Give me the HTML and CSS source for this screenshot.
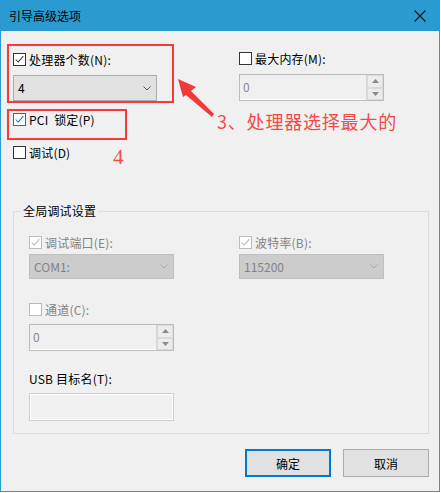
FILE: index.html
```html
<!DOCTYPE html>
<html lang="zh-CN">
<head>
<meta charset="utf-8">
<title>引导高级选项</title>
<link rel="stylesheet" href="styles.css">
</head>
<body>
<div class="window">
  <div class="titlebar">
    <span class="title">引导高级选项</span>
    <svg class="close" width="12" height="12" viewBox="0 0 12 12"><path d="M0.5 0.5 L11.5 11.5 M11.5 0.5 L0.5 11.5" stroke="#111" stroke-width="1.1" fill="none"/></svg>
  </div>
  <div class="content">
    <div class="top">
      <div class="col-left">
        <div class="redbox box1">
          <label class="check-row">
            <span class="cb"><svg viewBox="0 0 13 13" width="11" height="11"><path d="M2 6.5 L5 9.5 L11 2.5" stroke="#333" stroke-width="1.2" fill="none"/></svg></span>
            <span>处理器个数(N):</span>
          </label>
          <div class="combo combo-main"><span>4</span>
            <svg class="chev" width="8" height="5" viewBox="0 0 8 5"><path d="M0.5 0.5 L4 4 L7.5 0.5" stroke="#555" fill="none"/></svg>
          </div>
        </div>
        <div class="redbox box2">
          <label class="check-row">
            <span class="cb cb-focus"><svg viewBox="0 0 13 13" width="11" height="11"><path d="M2 6.5 L5 9.5 L11 2.5" stroke="#0078d7" stroke-width="1.2" fill="none"/></svg></span>
            <span>PCI&nbsp; 锁定(P)</span>
          </label>
        </div>
        <label class="check-row debug-row">
          <span class="cb"></span>
          <span>调试(D)</span>
        </label>
      </div>
      <div class="col-right">
        <label class="check-row">
          <span class="cb"></span>
          <span>最大内存(M):</span>
        </label>
        <div class="spin spin-mem">
          <span class="spin-val">0</span>
          <div class="spin-btns">
            <div class="sbtn"><svg width="7" height="4" viewBox="0 0 7 4"><path d="M0 4 L3.5 0 L7 4Z" fill="#8a8a8a"/></svg></div>
            <div class="sbtn"><svg width="7" height="4" viewBox="0 0 7 4"><path d="M0 0 L3.5 4 L7 0Z" fill="#8a8a8a"/></svg></div>
          </div>
        </div>
      </div>
    </div>

    <div class="group">
      <span class="legend">全局调试设置</span>
      <div class="group-grid">
        <div class="gcol">
          <label class="check-row disabled">
            <span class="cb cb-dis"><svg viewBox="0 0 13 13" width="11" height="11"><path d="M2 6.5 L5 9.5 L11 2.5" stroke="#b5b5b5" stroke-width="1.2" fill="none"/></svg></span>
            <span>调试端口(E):</span>
          </label>
          <div class="combo combo-dis"><span>COM1:</span>
            <svg class="chev" width="8" height="5" viewBox="0 0 8 5"><path d="M0.5 0.5 L4 4 L7.5 0.5" stroke="#a8a8a8" fill="none"/></svg>
          </div>
          <label class="check-row disabled channel-row">
            <span class="cb cb-dis"></span>
            <span>通道(C):</span>
          </label>
          <div class="spin spin-chan">
            <span class="spin-val">0</span>
            <div class="spin-btns">
              <div class="sbtn"><svg width="7" height="4" viewBox="0 0 7 4"><path d="M0 4 L3.5 0 L7 4Z" fill="#8a8a8a"/></svg></div>
              <div class="sbtn"><svg width="7" height="4" viewBox="0 0 7 4"><path d="M0 0 L3.5 4 L7 0Z" fill="#8a8a8a"/></svg></div>
            </div>
          </div>
          <div class="usb-label">USB 目标名(T):</div>
          <div class="textbox"></div>
        </div>
        <div class="gcol">
          <label class="check-row disabled">
            <span class="cb cb-dis"><svg viewBox="0 0 13 13" width="11" height="11"><path d="M2 6.5 L5 9.5 L11 2.5" stroke="#b5b5b5" stroke-width="1.2" fill="none"/></svg></span>
            <span>波特率(B):</span>
          </label>
          <div class="combo combo-dis"><span>115200</span>
            <svg class="chev" width="8" height="5" viewBox="0 0 8 5"><path d="M0.5 0.5 L4 4 L7.5 0.5" stroke="#a8a8a8" fill="none"/></svg>
          </div>
        </div>
      </div>
    </div>

    <div class="buttons">
      <button class="btn btn-default">确定</button>
      <button class="btn">取消</button>
    </div>
  </div>

  <div class="note note3">3、处理器选择最大的</div>
  <div class="note note4">4</div>
  <svg class="arrow" width="440" height="200" viewBox="0 0 440 200">
    <polygon points="178,79 196,87 191,91 214,114 212,117 186,95 183,97" fill="#f03a3a"/>
  </svg>
</div>
</body>
</html>
```

FILE: styles.css
```css
* { box-sizing: border-box; }
html, body { margin: 0; padding: 0; background: #ffffff; }
body {
  font-family: "Noto Sans CJK SC", "Noto Sans", sans-serif;
  font-size: 12px;
  color: #000;
}
.window {
  position: relative;
  width: 440px;
  height: 492px;
  background: #f0f0f0;
  border: 1px solid #2a9ad0;
  border-top: none;
  display: flex;
  flex-direction: column;
}
.titlebar {
  flex: none;
  height: 31px;
  margin: 0 -1px;
  background: #2a9ad0;
  display: flex;
  align-items: center;
  justify-content: space-between;
  padding: 0 10px 0 9px;
}
.title { font-size: 12px; line-height: 16px; color: #000; }
.close { display: block; margin-right: 4px; }

.content { display: flex; flex-direction: column; }

.top {
  display: grid;
  grid-template-columns: 238px 1fr;
}
.col-left { padding-left: 6px; display: flex; flex-direction: column; }
.redbox { border: 2px solid #f63a3a; }
.box1 {
  margin-top: 13px;
  width: 167px;
  height: 59px;
  padding: 7px 0 0 4px;
}
.box2 {
  margin-top: 6px;
  width: 120px;
  height: 31px;
  padding: 2px 0 0 4px;
}
.check-row {
  display: flex;
  align-items: center;
  gap: 3px;
  height: 13px;
  line-height: 16px;
  white-space: nowrap;
  letter-spacing: 0.2px;
}
.cb {
  width: 13px;
  height: 13px;
  flex: none;
  border: 1px solid #333;
  background: #fff;
  display: flex;
  align-items: center;
  justify-content: center;
}
.cb-focus { border-color: #0078d7; }
.cb-dis { border-color: #bcbcbc; background: #fff; }
.disabled { color: #838383; }
.debug-row { margin-top: 6px; margin-left: 6px; }

.combo {
  display: flex;
  align-items: center;
  justify-content: space-between;
  padding: 0 5px 0 4px;
  line-height: 16px;
}
.combo-main {
  margin-top: 9px;
  width: 144px;
  height: 26px;
  background: #e1e1e1;
  border: 1px solid #adadad;
}
.combo-dis {
  margin-top: 5px;
  width: 145px;
  height: 25px;
  background: #cccccc;
  border: 1px solid #bfbfbf;
  color: #838383;
}

.col-right { display: flex; flex-direction: column; }
.col-right .check-row { margin-top: 21px; }

.spin {
  display: flex;
  width: 145px;
  height: 27px;
  border: 1px solid #bcbcbc;
  background: #f0f0f0;
  box-shadow: inset -1px -1px 0 #fff;
}
.spin-mem { margin-top: 9px; }
.spin-chan { margin-top: 8px; }
.spin-val { flex: 1; padding: 4px 0 0 3px; color: #8a8a8a; line-height: 16px; }
.spin-btns {
  width: 17px;
  display: flex;
  flex-direction: column;
  border-left: 1px solid #d5d5d5;
}
.sbtn {
  flex: 1;
  display: flex;
  align-items: center;
  justify-content: center;
  background: #ececec;
  border: 1px solid #dadada;
}

.group {
  position: relative;
  margin: 52px 0 0 12px;
  width: 416px;
  height: 223px;
  border: 1px solid #dcdcdc;
}
.legend {
  position: absolute;
  top: -9px;
  left: 7px;
  padding: 0 2px;
  background: #f0f0f0;
  line-height: 16px;
  letter-spacing: 0.2px;
}
.group-grid {
  display: grid;
  grid-template-columns: 210px 1fr;
  padding: 24px 0 0 15px;
}
.gcol { display: flex; flex-direction: column; }
.channel-row { margin-top: 24px; }
.usb-label { margin-top: 19px; line-height: 17px; height: 17px; letter-spacing: 0.2px; }
.textbox {
  margin-top: 6px;
  width: 145px;
  height: 28px;
  border: 1px solid #cfcfcf;
  box-shadow: inset 1px 1px 0 #fff, inset -1px -1px 0 #fff;
  background: #f0f0f0;
}

.buttons {
  display: flex;
  justify-content: flex-end;
  gap: 12px;
  margin-top: 15px;
  padding-right: 10px;
}
.btn {
  width: 86px;
  height: 28px;
  font: inherit;
  font-size: 12px;
  color: #000;
  background: #e1e1e1;
  border: 1px solid #adadad;
  padding: 0;
}
.btn-default { border: 2px solid #0078d7; }

.note { position: absolute; color: #f24a4a; pointer-events: none; }
.note3 {
  left: 216px;
  top: 108px;
  font-size: 18px;
  line-height: 26px;
  letter-spacing: 0.8px;
}
.note4 {
  left: 112px;
  top: 145px;
  font-family: "Liberation Serif", serif;
  font-size: 21px;
  line-height: 24px;
}
.arrow { position: absolute; left: -1px; top: 0; pointer-events: none; }
```
